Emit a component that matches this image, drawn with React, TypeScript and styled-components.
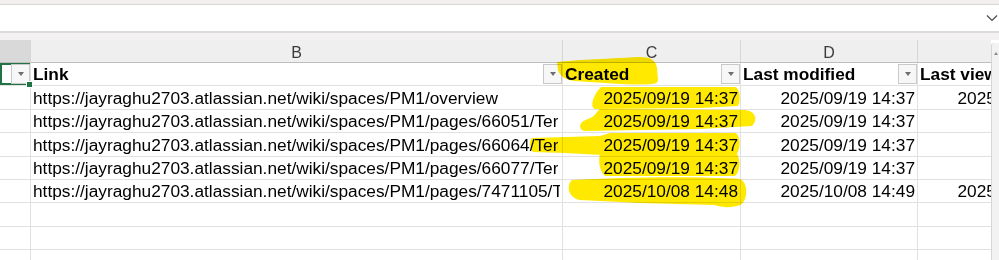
import styled, { createGlobalStyle } from "styled-components";

const GlobalStyle = createGlobalStyle`
  html, body {
    margin: 0;
    padding: 0;
    background: #ffffff;
  }
  body {
    font-family: "Liberation Sans", Arial, sans-serif;
  }
`;

const COLS = "31px 532px 178px 177px 177px";

type Row = {
  link: string;
  created: string;
  modified: string;
  viewed?: string;
};

// links are cut where the next column starts, as the sheet shows them
const rows: Row[] = [
  {
    link: "https://jayraghu2703.atlassian.net/wiki/spaces/PM1/overview",
    created: "2025/09/19 14:37",
    modified: "2025/09/19 14:37",
    viewed: "2025/09/19 14:37",
  },
  {
    link: "https://jayraghu2703.atlassian.net/wiki/spaces/PM1/pages/66051/Ter",
    created: "2025/09/19 14:37",
    modified: "2025/09/19 14:37",
  },
  {
    link: "https://jayraghu2703.atlassian.net/wiki/spaces/PM1/pages/66064/Ter",
    created: "2025/09/19 14:37",
    modified: "2025/09/19 14:37",
  },
  {
    link: "https://jayraghu2703.atlassian.net/wiki/spaces/PM1/pages/66077/Ter",
    created: "2025/09/19 14:37",
    modified: "2025/09/19 14:37",
  },
  {
    link: "https://jayraghu2703.atlassian.net/wiki/spaces/PM1/pages/7471105/T",
    created: "2025/10/08 14:48",
    modified: "2025/10/08 14:49",
    viewed: "2025/10/08 14:49",
  },
];

const EMPTY_ROWS = 3;

export default function App() {
  return (
    <>
      <GlobalStyle />
      <Page>
        <TopStrip />
        <FormulaBar>
          <svg width="12" height="8" viewBox="0 0 12 8">
            <polyline
              points="1,1.5 6,6.5 11,1.5"
              fill="none"
              stroke="#4a4a4a"
              strokeWidth="1.2"
            />
          </svg>
        </FormulaBar>
        <Band />
        <SheetArea>
          <Grid>
            <ColHead $active />
            <ColHead>B</ColHead>
            <ColHead>C</ColHead>
            <ColHead>D</ColHead>
            <ColHead>E</ColHead>

            <Cell $selected $align="end">
              <FilterBtn />
            </Cell>
            <Cell $bold>
              <CellText>Link</CellText>
              <FilterBtn />
            </Cell>
            <Cell $bold>
              <CellText>Created</CellText>
              <FilterBtn />
            </Cell>
            <Cell $bold>
              <CellText>Last modified</CellText>
              <FilterBtn />
            </Cell>
            <Cell $bold>
              <CellText>Last viewed</CellText>
              <FilterBtn />
            </Cell>

            {rows.map((r, i) => (
              <RowGroup key={i}>
                <Cell />
                <Cell>
                  <CellText>{r.link}</CellText>
                </Cell>
                <Cell $align="end">
                  <CellText>{r.created}</CellText>
                </Cell>
                <Cell $align="end">
                  <CellText>{r.modified}</CellText>
                </Cell>
                <Cell $align="end">
                  <CellText>{r.viewed ?? ""}</CellText>
                </Cell>
              </RowGroup>
            ))}

            {Array.from({ length: EMPTY_ROWS }).map((_, i) => (
              <RowGroup key={"e" + i}>
                <Cell />
                <Cell />
                <Cell />
                <Cell />
                <Cell />
              </RowGroup>
            ))}
          </Grid>
          <ScrollBar>
            <ScrollArrow />
          </ScrollBar>
        </SheetArea>

        {/* marker highlight scribbles drawn over the sheet */}
        <Marker viewBox="0 0 999 260" width="999" height="260">
          <g fill="#ffe900">
            <path d="M557,62 C575,60 600,59 640,57 C650,57 656,60 657,68 L658,80 C658,85 650,85 620,84 L575,81 C565,80 560,76 558,70 Z" />
            <path d="M601,87 L735,87 C740,88 741,100 738,106 L700,108 L595,109 C590,108 592,96 601,87 Z" />
            <path d="M600,109 L745,110 C756,111 758,120 752,126 L700,129 L585,131 C578,130 578,122 588,119 C595,117 596,112 600,109 Z" />
            <path d="M532,138 L600,136 L610,133 L735,133 C741,135 741,150 736,155 L620,156 L565,153 L533,152 C529,148 529,141 532,138 Z" />
            <path d="M600,154 L737,154 C741,160 740,172 735,176 L605,176 C600,172 598,162 600,154 Z" />
            <path d="M572,180 C620,177 700,176 740,179 C748,182 748,198 742,204 C735,208 722,208 715,205 L640,203 L580,200 C568,198 566,185 572,180 Z" />
          </g>
        </Marker>
      </Page>
    </>
  );
}

const Page = styled.div`
  position: relative;
  width: 999px;
  height: 260px;
  overflow: hidden;
  display: flex;
  flex-direction: column;
  background: #ffffff;
`;

const TopStrip = styled.div`
  height: 4px;
  background: #f4efef;
  border-bottom: 1px solid #dcd7d7;
  flex: none;
`;

const FormulaBar = styled.div`
  height: 26px;
  flex: none;
  display: flex;
  align-items: center;
  justify-content: flex-end;
  padding-right: 1px;
  background: #ffffff;
`;

const Band = styled.div`
  height: 7px;
  flex: none;
  background: #f3f1f1;
  border-top: 2px solid #dddada;
`;

const SheetArea = styled.div`
  flex: 1;
  display: flex;
  min-height: 0;
`;

const Grid = styled.div`
  width: 991px;
  flex: none;
  overflow: hidden;
  display: grid;
  grid-template-columns: ${COLS};
  grid-template-rows: 23px repeat(${rows.length + 1 + EMPTY_ROWS}, 23.4px);
  align-content: start;
`;

const RowGroup = styled.div`
  display: contents;
`;

const ColHead = styled.div<{ $active?: boolean }>`
  box-sizing: border-box;
  display: flex;
  align-items: center;
  justify-content: center;
  padding-top: 3px;
  background: ${(p) => (p.$active ? "#d9d9d9" : "#efefef")};
  border-right: 1px solid #d6d6d6;
  border-bottom: 1px solid #bdbdbd;
  color: #3c3c3c;
  font-size: 16px;
`;

const Cell = styled.div<{
  $bold?: boolean;
  $align?: "start" | "end";
  $selected?: boolean;
}>`
  position: relative;
  box-sizing: border-box;
  display: flex;
  align-items: flex-end;
  justify-content: ${(p) => (p.$align === "end" ? "flex-end" : "space-between")};
  gap: 4px;
  padding: 0 2px 1px 2px;
  border-right: 1px solid #e1e1e1;
  border-bottom: 1px solid #e1e1e1;
  overflow: hidden;
  white-space: nowrap;
  color: #000000;
  font-size: 17.3px;
  font-weight: ${(p) => (p.$bold ? 700 : 400)};
  ${(p) =>
    p.$selected &&
    `
    overflow: visible;
    box-shadow: inset 0 0 0 2px #217346;
    &::after {
      content: "";
      position: absolute;
      right: -3px;
      bottom: -3px;
      width: 5px;
      height: 5px;
      background: #217346;
      border: 1px solid #ffffff;
      z-index: 2;
    }
  `}
`;

const CellText = styled.span`
  overflow: hidden;
  min-width: 0;
  flex: 0 1 auto;
  line-height: 20px;
`;

const FilterBtn = styled.span`
  flex: none;
  align-self: center;
  box-sizing: border-box;
  width: 19px;
  height: 20px;
  margin: 1px -2px 0 0;
  border: 1px solid #c9c9c9;
  background: #f7f7f7;
  display: flex;
  align-items: center;
  justify-content: center;

  &::before {
    content: "";
    width: 0;
    height: 0;
    border-left: 3.5px solid transparent;
    border-right: 3.5px solid transparent;
    border-top: 4px solid #6e6e6e;
  }
`;

const ScrollBar = styled.div`
  flex: 1;
  margin-top: 3px;
  border-left: 1px solid #d6d6d6;
  background: #f2f2f2;
  border-top-left-radius: 3px;
  display: flex;
  justify-content: center;
  padding-top: 9px;
`;

const ScrollArrow = styled.span`
  width: 0;
  height: 0;
  border-left: 2px solid transparent;
  border-right: 2px solid transparent;
  border-bottom: 3px solid #8a8a8a;
`;

const Marker = styled.svg`
  position: absolute;
  top: 0;
  left: 0;
  pointer-events: none;
  mix-blend-mode: multiply;
`;
